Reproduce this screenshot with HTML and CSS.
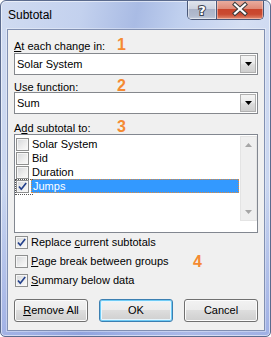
FILE: index.html
```html
<!DOCTYPE html>
<html>
<head>
<meta charset="utf-8">
<link rel="stylesheet" href="styles.css">
</head>
<body>
<div class="window">
  <div class="titlebar">
    <span class="title">Subtotal</span>
    <div class="caption">
      <div class="cbtn help">
        <svg width="28" height="19" viewBox="0 0 28 19"><text x="14" y="14.5" text-anchor="middle" class="qmark">?</text></svg>
      </div>
      <div class="cbtn close">
        <svg width="46" height="19" viewBox="0 0 46 19">
          <path d="M18 4.5 L28 13.5 M28 4.5 L18 13.5" stroke="#3b3b3b" stroke-width="4.2" stroke-linecap="square" fill="none"/>
          <path d="M18 4.5 L28 13.5 M28 4.5 L18 13.5" stroke="#ffffff" stroke-width="2.2" stroke-linecap="square" fill="none"/>
        </svg>
      </div>
    </div>
  </div>
  <div class="client">
    <div class="lbl l1"><span class="lbl-text"><u>A</u>t each change in:</span><span class="num">1</span></div>
    <div class="combo c1"><span class="combo-text">Solar System</span><span class="dd"><svg width="7" height="4" viewBox="0 0 7 4"><path d="M0 0 H7 L3.5 4 Z" fill="#000"/></svg></span></div>
    <div class="lbl l2"><span class="lbl-text"><u>U</u>se function:</span><span class="num">2</span></div>
    <div class="combo c2"><span class="combo-text">Sum</span><span class="dd"><svg width="7" height="4" viewBox="0 0 7 4"><path d="M0 0 H7 L3.5 4 Z" fill="#000"/></svg></span></div>
    <div class="lbl l3"><span class="lbl-text">A<u>d</u>d subtotal to:</span><span class="num">3</span></div>
    <div class="listbox">
      <div class="items">
        <div class="item"><span class="cb"></span><span class="itext">Solar System</span></div>
        <div class="item"><span class="cb"></span><span class="itext">Bid</span></div>
        <div class="item"><span class="cb"></span><span class="itext">Duration</span></div>
        <div class="item focus"><span class="cb"><svg width="11" height="11" viewBox="0 0 11 11"><path d="M2 5.5 L4.3 8.2 L9.2 2" stroke="#24418c" stroke-width="1.7" fill="none"/></svg></span><span class="itext sel">Jumps</span></div>
      </div>
      <div class="scrollbar">
        <div class="sbtn"><svg width="7" height="4" viewBox="0 0 7 4"><path d="M0 4 H7 L3.5 0 Z" fill="#a6a6a6"/></svg></div>
        <div class="sbtn"><svg width="7" height="4" viewBox="0 0 7 4"><path d="M0 0 H7 L3.5 4 Z" fill="#a6a6a6"/></svg></div>
      </div>
    </div>
    <div class="checks">
      <div class="crow"><span class="cb"><svg width="11" height="11" viewBox="0 0 11 11"><path d="M2 5.5 L4.3 8.2 L9.2 2" stroke="#24418c" stroke-width="1.7" fill="none"/></svg></span><span class="ctext">Replace <u>c</u>urrent subtotals</span></div>
      <div class="crow"><span class="cb"></span><span class="ctext wide"><u>P</u>age break between groups</span><span class="num">4</span></div>
      <div class="crow"><span class="cb"><svg width="11" height="11" viewBox="0 0 11 11"><path d="M2 5.5 L4.3 8.2 L9.2 2" stroke="#24418c" stroke-width="1.7" fill="none"/></svg></span><span class="ctext"><u>S</u>ummary below data</span></div>
    </div>
    <div class="buttons">
      <div class="btn"><u>R</u>emove All</div>
      <div class="btn default">OK</div>
      <div class="btn">Cancel</div>
    </div>
  </div>
</div>
</body>
</html>
```
FILE: styles.css
```css
* { box-sizing: border-box; }
html, body { margin: 0; padding: 0; }
body {
  width: 271px;
  height: 337px;
  overflow: hidden;
  font-family: "Liberation Sans", Arial, sans-serif;
  font-size: 11px;
  color: #000;
  background: #ffffff;
}
.window {
  width: 271px;
  height: 337px;
  border: 1px solid #5b6b8e;
  border-radius: 6px 6px 5px 5px;
  background:
    linear-gradient(180deg, rgba(255,255,255,0) 0%, rgba(255,255,255,0) 55%, rgba(110,130,215,0.42) 100%),
    linear-gradient(100deg, #d0dbf1 0%, #c3d1ee 25%, #a9bbe4 42%, #bfcfee 55%, #d5dff3 75%, #c3d1ee 100%);
  box-shadow: inset 0 0 0 1px rgba(255,255,255,0.55);
  display: flex;
  flex-direction: column;
  overflow: hidden;
}
.titlebar {
  flex: none;
  height: 28px;
  display: flex;
  align-items: flex-start;
  padding-right: 6px;
}
.title {
  padding: 7px 0 0 7px;
  font-size: 12px;
  line-height: 15px;
  color: #000;
}
.caption {
  margin-left: auto;
  margin-top: -1px;
  height: 20px;
  display: flex;
  border: 1px solid #4a5878;
  border-top: none;
  border-radius: 0 0 5px 5px;
  overflow: hidden;
}
.cbtn { height: 19px; display: flex; }
.help {
  width: 29px;
  border-right: 1px solid #4a5878;
  background: linear-gradient(180deg, #e2e6ee 0%, #cdd3e0 45%, #aab3c8 50%, #b3bccf 85%, #c6cede 100%);
  box-shadow: inset 0 0 0 1px rgba(255,255,255,0.5);
}
.close {
  width: 46px;
  background: linear-gradient(180deg, #eab0a3 0%, #df8b78 45%, #c9452c 50%, #c94a31 75%, #e08a70 100%);
  box-shadow: inset 0 0 0 1px rgba(255,220,210,0.5);
}
.qmark {
  font-family: "DejaVu Sans", sans-serif;
  font-weight: bold;
  font-size: 13px;
  fill: #ffffff;
  stroke: #3d4452;
  stroke-width: 2px;
  paint-order: stroke;
}
.client {
  flex: none;
  height: 302px;
  margin: 0 5px 0 6px;
  border: 1px solid #8190b2;
  background: #f0f0f0;
  padding: 8px 6px 0 6px;
  display: flex;
  flex-direction: column;
  box-shadow: 0 0 0 1px rgba(255,255,255,0.35);
}
.lbl {
  height: 13px;
  line-height: 13px;
  display: flex;
  align-items: baseline;
  white-space: nowrap;
}
.lbl-text { width: 103px; }
.num {
  color: #f58a32;
  font-weight: bold;
  font-size: 16px;
  line-height: 13px;
}
.l2 { margin-top: 4px; }
.l3 { margin-top: 6px; }
.combo {
  height: 22px;
  border: 1px solid #85888d;
  background: #fff;
  display: flex;
  align-items: stretch;
}
.c1 { margin-top: 2px; }
.combo-text {
  flex: 1;
  padding-left: 2px;
  line-height: 20px;
}
.dd {
  width: 16px;
  margin: 1px;
  border: 1px solid #b0b0b0;
  background: linear-gradient(180deg, #f4f4f4 0%, #ebebeb 45%, #dcdcdc 55%, #cfcfcf 100%);
  display: flex;
  align-items: center;
  justify-content: center;
}
.listbox {
  margin-top: 1px;
  height: 99px;
  border: 1px solid #828790;
  background: #fff;
  display: flex;
  align-items: flex-start;
}
.items {
  flex: 1;
  padding: 2px 1px 0 1px;
}
.item {
  height: 14px;
  display: flex;
  align-items: center;
  line-height: 14px;
}
.item.focus { position: relative; }
.item.focus::before {
  content: "";
  position: absolute;
  left: -1px;
  top: 0;
  width: 17px;
  height: 14px;
  border: 1px dotted #555;
  border-right: none;
}
.cb {
  flex: none;
  width: 13px;
  height: 13px;
  border: 1px solid #8e8f8f;
  background: linear-gradient(135deg, #d4d6d9 0%, #eeeeee 60%, #fbfbfb 100%);
  box-shadow: inset 0 0 0 1px #f6f6f6;
  display: flex;
}
.itext {
  flex: 1;
  height: 14px;
  margin-left: 2px;
  padding-left: 1px;
}
.itext.sel {
  background: #3399ff;
  color: #fff;
  border: 1px dotted #e08a3c;
  line-height: 12px;
}
.scrollbar {
  flex: none;
  width: 17px;
  height: 85px;
  margin-top: 1px;
  background: #efefef;
  border: 1px solid #e4e4e4;
  display: flex;
  flex-direction: column;
  justify-content: space-between;
}
.sbtn {
  height: 16px;
  display: flex;
  align-items: center;
  justify-content: center;
}
.checks { display: flex; flex-direction: column; }
.crow {
  height: 19px;
  line-height: 19px;
  display: flex;
  align-items: center;
  padding-left: 1px;
  white-space: nowrap;
}
.ctext { margin-left: 3px; }
.ctext.wide { width: 162px; }
.crow .num { line-height: 19px; }
.buttons {
  margin-top: 9px;
  height: 23px;
  display: flex;
  justify-content: space-between;
}
.btn {
  width: 74px;
  height: 23px;
  border: 1px solid #707070;
  border-radius: 3px;
  background: linear-gradient(180deg, #f2f2f2 0%, #ebebeb 50%, #dddddd 50%, #cfcfcf 100%);
  box-shadow: inset 0 0 0 1px #fcfcfc;
  text-align: center;
  line-height: 21px;
}
.btn.default {
  border-color: #3c7fb1;
  box-shadow: inset 0 0 0 1px #6fcbf5, inset 0 0 0 2px #e6f5fd;
}
```
